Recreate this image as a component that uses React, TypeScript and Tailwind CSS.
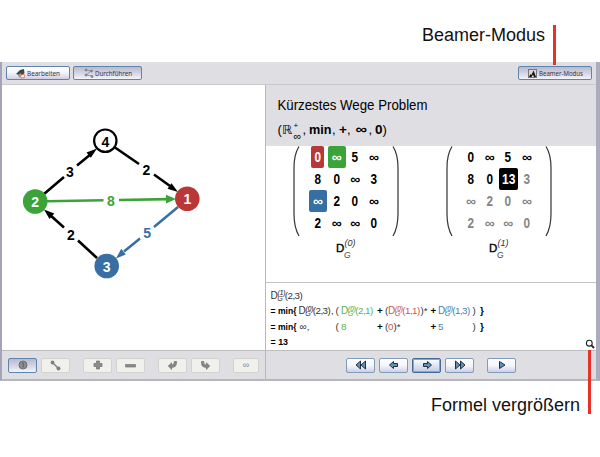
import type { ReactNode } from "react";

const raised = "border-[#7f9dbb] bg-gradient-to-b from-white via-[#f5f5fc] to-[#cfcfe5]";
const pressed = "border-[#5c84ac] bg-gradient-to-b from-[#b9bacd] via-[#d3d3e2] to-[#f4f4fc]";
const disabled = "border-[#d2d2ce] bg-[#f0f0ec]";

function Btn({ look, size, children }: { look: string; size: string; children: ReactNode }) {
  return (
    <button className={`flex shrink-0 items-center justify-center rounded-[2px] border ${look} ${size}`}>
      {children}
    </button>
  );
}

function Label({ text, width }: { text: string; width: number }) {
  return (
    <svg width={width} height="12" className="block overflow-visible">
      <text x="0" y="9" fontSize="7.800" fontFamily="Noto Sans, DejaVu Sans, sans-serif" fill="#33333f" textLength={width} lengthAdjust="spacingAndGlyphs">
        {text}
      </text>
    </svg>
  );
}

function Graph() {
  return (
    <svg width="262" height="266" viewBox="2 85 262 266" className="block" fontFamily="Liberation Sans, Arial, sans-serif" fontWeight="bold" fontSize="14" textAnchor="middle">
      <g stroke="#000" strokeWidth="2.6">
        <path d="M44 194L64 177M77 165.500L91 154M115 147.500L139 164M154 174.500L170 186M97 258L78 240.500M64 227.500L50 215" />
      </g>
      <path d="M97 148.500L90.800 157.700L86.500 152.500ZM178 192L167.500 188.700L171.500 183.200ZM44 209.500L54.300 213.600L49.500 219Z" fill="#000" />
      <path d="M47 201.200L103.500 200.300M119 200L168 199.100" stroke="#3ca33b" strokeWidth="2.6" />
      <path d="M176 199L166 194.800V203.400Z" fill="#3ca33b" />
      <path d="M178 207L154 227M140 238.500L124 251.500" stroke="#376ea3" strokeWidth="2.5" />
      <path d="M116 258.500L121.200 248.800L125.800 254.500Z" fill="#376ea3" />
      <circle cx="105.300" cy="140.700" r="11.200" fill="#fff" stroke="#000" strokeWidth="2.200" />
      <circle cx="35.200" cy="201.500" r="12.300" fill="#3ca33b" />
      <circle cx="187.300" cy="198.700" r="12.300" fill="#ba3737" />
      <circle cx="106.700" cy="266" r="12.300" fill="#376ea3" />
      <text x="105.300" y="146.500">4</text>
      <text x="70" y="177.200">3</text>
      <text x="146.500" y="175.200">2</text>
      <text x="71" y="239.600">2</text>
      <text x="111" y="205.500" fill="#3ca33b">8</text>
      <text x="147.200" y="237.800" fill="#376ea3">5</text>
      <g fill="#fff">
        <text x="35.200" y="206.500">2</text>
        <text x="187.300" y="203.700">1</text>
        <text x="106.700" y="271.500">3</text>
      </g>
    </svg>
  );
}

function Paren({ flip = false }: { flip?: boolean }) {
  return (
    <svg width="7" height="91" viewBox="0 0 7 91" className={flip ? "block -scale-x-100" : "block"}>
      <path d="M6 .5C2.500 6 1 12 1 22V68C1 78 2.500 84 6 90" fill="none" stroke="#333" strokeWidth="1.200" />
    </svg>
  );
}

type Cell = { v: string; box?: string; muted?: boolean };

function Matrix({ cells, index }: { cells: Cell[]; index: string }) {
  return (
    <div className="flex w-[106px] flex-col items-center">
      <div className="flex w-full justify-between">
        <Paren />
        <div className="grid h-[88px] grid-cols-[repeat(4,18.7px)] grid-rows-4">
          {cells.map((c, i) => (
            <div key={i} className="flex items-center justify-center">
              <span className={`flex h-[22px] items-center justify-center rounded-[2px] text-[14px] font-bold leading-none ${c.box ?? (c.muted ? "text-[#858585]" : "text-black")}`}>
                <span className={c.v === "∞" ? "text-[14px]" : c.v === "13" ? "scale-x-[0.86]" : "scale-x-[0.84]"}>{c.v}</span>
              </span>
            </div>
          ))}
        </div>
        <Paren flip />
      </div>
      <svg width="24" height="24" className="-mt-[1px] block" fontFamily="Liberation Sans, Arial, sans-serif">
        <text x="2" y="16" fontSize="11.500" stroke="#000" strokeWidth=".35">D</text>
        <text x="10.500" y="10" fontSize="9" fontStyle="italic" fill="#333">({index})</text>
        <text x="10" y="22" fontSize="8.500" fontStyle="italic" fill="#444">G</text>
      </svg>
    </div>
  );
}

const first: Cell[] = [
  { v: "0", box: "w-[13px] bg-[#ba3737] text-white" }, { v: "∞", box: "w-[18px] bg-[#3ca33b] text-white" }, { v: "5" }, { v: "∞" },
  { v: "8" }, { v: "0" }, { v: "∞" }, { v: "3" },
  { v: "∞", box: "w-[18px] bg-[#376ea3] text-white" }, { v: "2" }, { v: "0" }, { v: "∞" },
  { v: "2" }, { v: "∞" }, { v: "∞" }, { v: "0" },
];

const second: Cell[] = [
  { v: "0" }, { v: "∞" }, { v: "5" }, { v: "∞" },
  { v: "8" }, { v: "0" }, { v: "13", box: "w-[19px] shrink-0 bg-black text-white" }, { v: "3", muted: true },
  { v: "∞", muted: true }, { v: "2", muted: true }, { v: "0", muted: true }, { v: "∞", muted: true },
  { v: "2", muted: true }, { v: "∞", muted: true }, { v: "∞", muted: true }, { v: "0", muted: true },
];

function Entry({ x, y, sup, args, fill = "#333" }: { x: number; y: number; sup: string; args: string; fill?: string }) {
  return (
    <g fill={fill}>
      <text x={x} y={y} fontSize="10">D</text>
      <text x={x + 7} y={y - 3.5} fontSize="7.800" fontStyle="italic" textLength="8" lengthAdjust="spacingAndGlyphs" stroke={fill} strokeWidth=".15">({sup})</text>
      <text x={x + 6.7} y={y + 2} fontSize="7.200" fontStyle="italic">G</text>
      <text x={x + 14.3} y={y} fontSize="9.800" textLength="18" lengthAdjust="spacing">({args})</text>
    </g>
  );
}

function Formula() {
  return (
    <svg width="330" height="68" viewBox="266 283 330 68" className="block" fontFamily="Liberation Sans, Arial, sans-serif" fontSize="9.800">
      <Entry x={270.5} y={298.5} sup="1" args="2,3" />
      <g fontWeight="bold">
        <text x="270.500" y="314" textLength="26" lengthAdjust="spacingAndGlyphs">= min{"{"}</text>
        <text x="270.500" y="329.500" textLength="26" lengthAdjust="spacingAndGlyphs">= min{"{"}</text>
        <text x="270.500" y="344.500" textLength="17.500" lengthAdjust="spacingAndGlyphs">= 13</text>
        <text x="377" y="314">+</text>
        <text x="377" y="329.500">+</text>
        <text x="430.500" y="314">+</text>
        <text x="430.500" y="329.500">+</text>
        <text x="480" y="314">{"}"}</text>
        <text x="480" y="329.500">{"}"}</text>
      </g>
      <Entry x={298.5} y={314} sup="0" args="2,3" />
      <Entry x={341} y={314} sup="0" args="2,1" fill="#55b454" />
      <Entry x={388} y={314} sup="0" args="1,1" fill="#ca5555" />
      <Entry x={438} y={314} sup="0" args="1,3" fill="#477fb3" />
      <g fill="#333">
        <text x="331" y="314">,</text>
        <text x="335.500" y="314">(</text>
        <text x="385" y="314">(</text>
        <text x="420.500" y="314">)*</text>
        <text x="472.500" y="314">)</text>
        <text x="299.500" y="329.500" textLength="10">∞,</text>
        <text x="335.500" y="329.500">(</text>
        <text x="385" y="329.500">(</text>
        <text x="393.500" y="329.500">)*</text>
        <text x="472.500" y="329.500">)</text>
      </g>
      <text x="341" y="329.500" fill="#55b454">8</text>
      <text x="388" y="329.500" fill="#ca5555">0</text>
      <text x="438" y="329.500" fill="#477fb3">5</text>
      <circle cx="589.300" cy="343.200" r="2.900" fill="#fff" stroke="#222" strokeWidth="1.100" />
      <path d="M591.200 345.200L594 348" stroke="#222" strokeWidth="1.800" />
    </svg>
  );
}

function PlayIcon({ d }: { d: string }) {
  return (
    <svg width="14" height="12" viewBox="0 0 14 12" className="block">
      <path d={d} fill="#6390b5" stroke="#1f3144" strokeWidth="1" />
    </svg>
  );
}

function LeftTools() {
  return (
    <div className="flex h-[29px] items-center border-t border-[#bdbdc0] pl-[6px]">
      <Btn look={pressed} size="h-[15px] w-[29px]">
        <svg width="10" height="10" viewBox="0 0 10 10"><circle cx="5" cy="5" r="4" fill="#8c8c94" stroke="#707078" /><path d="M4 3.500L5.200 2.800V7.500" stroke="#606068" fill="none" /></svg>
      </Btn>
      <div className="ml-[4px] flex gap-[13px]">
        <Btn look={disabled} size="h-[15px] w-[29px]">
          <svg width="11" height="11" viewBox="0 0 11 11" fill="#808080"><path d="M2.500 2.500L8.500 8.500" stroke="#808080" strokeWidth="1.500" /><circle cx="2.500" cy="2.500" r="1.900" /><circle cx="8.500" cy="8.500" r="2" /></svg>
        </Btn>
        <div className="flex gap-[4px]">
          <Btn look={disabled} size="h-[15px] w-[29px]">
            <svg width="10" height="10" viewBox="0 0 10 10"><path d="M3.500 1H6.500V3.500H9V6.500H6.500V9H3.500V6.500H1V3.500H3.500Z" fill="#8c8c8c" stroke="#777" strokeWidth=".8" /></svg>
          </Btn>
          <Btn look={disabled} size="h-[15px] w-[29px]">
            <svg width="11" height="10" viewBox="0 0 11 10"><path d="M.5 4.500H10.500V7H.5Z" fill="#8c8c8c" stroke="#777" strokeWidth=".7" /></svg>
          </Btn>
        </div>
        <div className="flex gap-[4px]">
          <Btn look={disabled} size="h-[15px] w-[29px]">
            <svg width="11" height="11" viewBox="0 0 11 11"><path d="M.8 6L5 2V4.500C6.300 4.300 7 3 7 1H9.800C10.500 5 8.500 7.800 5 7.800V10.200Z" fill="#858585" /></svg>
          </Btn>
          <Btn look={disabled} size="h-[15px] w-[29px]">
            <svg width="11" height="11" viewBox="0 0 11 11"><path d="M10.200 6L6 2V4.500C4.700 4.300 4 3 4 1H1.200C.5 5 2.500 7.800 6 7.800V10.200Z" fill="#858585" /></svg>
          </Btn>
        </div>
        <Btn look={disabled} size="h-[15px] w-[26px]">
          <span className="text-[9px] leading-none text-[#888]">∞</span>
        </Btn>
      </div>
    </div>
  );
}

export default function App() {
  return (
    <div className="relative flex h-[457px] w-[600px] flex-col overflow-hidden bg-white font-['Liberation_Sans',Arial,sans-serif] text-black">
      <div className="flex h-[62px] justify-end">
        <svg width="200" height="62" viewBox="400 0 200 62" className="block">
          <text x="422" y="41" fontSize="17.600" fill="#111" textLength="123" lengthAdjust="spacingAndGlyphs">Beamer-Modus</text>
        </svg>
      </div>

      <div className="flex h-[319px] flex-col border-b-2 border-l-2 border-r-4 border-b-[#b5b7ba] border-l-[#a4a4b8] border-r-[#adabc0] bg-[#dfdee3]">
        <div className="flex h-[23px] items-center justify-between border-b border-[#c9c9ce] pl-[4px] pr-[4px]">
          <div className="flex gap-[3px]">
            <Btn look="border-[#5c84ac] bg-gradient-to-b from-white via-[#f2f2fa] to-[#cfcfe5]" size="h-[14px] w-[64px] gap-[1px]">
              <svg width="10" height="11" viewBox="0 0 10 11" className="shrink-0"><path d="M0 6L4 2L8 1L8.500 5L6 8Z" fill="#444" /><path d="M2 7L5 5L6 9L3 9.500Z" fill="#91a492" /><path d="M4.500 7.500L8 6L8.500 9.500L5 10Z" fill="#fff" stroke="#e06b64" strokeWidth=".9" /></svg>
              <Label text="Bearbeiten" width={33} />
            </Btn>
            <Btn look={pressed} size="h-[14px] w-[69px] gap-[1px]">
              <svg width="10" height="10" viewBox="0 0 10 10" fill="#85858b" stroke="#85858b" className="shrink-0"><path d="M2 2L7 3L2 7L8 8" fill="none" strokeWidth=".8" /><circle cx="2" cy="2" r="1" /><circle cx="7.500" cy="3" r="1" /><circle cx="2" cy="7" r="1" /><circle cx="8" cy="8.500" r="1" /></svg>
              <Label text="Durchführen" width={37} />
            </Btn>
          </div>
          <Btn look={pressed} size="h-[14px] w-[74px] gap-[2px]">
            <svg width="9" height="9" viewBox="0 0 9 9" className="shrink-0"><rect x=".5" y=".5" width="8" height="8" fill="#d7d7df" stroke="#777" /><path d="M1 8L2.500 5L3.500 6L5.500 1.500L8 8H6L5 5.500L3.500 8Z" fill="#111" /></svg>
            <Label text="Beamer-Modus" width={44} />
          </Btn>
        </div>

        <div className="flex h-[294px]">
          <div className="flex w-[263px] flex-col">
            <div className="h-[265px] overflow-hidden bg-white"><Graph /></div>
            <LeftTools />
          </div>
          <div className="flex w-[331px] flex-col border-l border-[#b8b8bb]">
            <svg width="330" height="61" viewBox="266 85 330 61" className="block" fontSize="14">
              <text x="277.500" y="109.500" textLength="150" lengthAdjust="spacingAndGlyphs">Kürzestes Wege Problem</text>
              <text x="277.500" y="134" fontSize="13">(</text>
              <text x="282" y="134" fontSize="12.500" fontFamily="DejaVu Sans, sans-serif" textLength="10" lengthAdjust="spacingAndGlyphs">ℝ</text>
              <text x="293.500" y="128" fontSize="8">+</text>
              <text x="293.500" y="140" fontSize="11">∞</text>
              <text x="302.500" y="134" fontSize="13">,</text>
              <g fontSize="13.500" fontWeight="bold">
                <text x="309" y="134" textLength="22.500" lengthAdjust="spacingAndGlyphs">min</text>
                <text x="339" y="134">+</text>
                <text x="355.500" y="134" fontSize="14" textLength="11.500" lengthAdjust="spacingAndGlyphs">∞</text>
                <text x="375" y="134">0</text>
              </g>
              <g fontSize="13">
                <text x="332" y="134">,</text><text x="347" y="134">,</text><text x="368.500" y="134">,</text><text x="382.500" y="134">)</text>
              </g>
            </svg>
            <div className="flex h-[136px] gap-[47px] overflow-hidden bg-white pl-[27px]">
              <Matrix cells={first} index="0" />
              <Matrix cells={second} index="1" />
            </div>
            <div className="h-[68px] border-t border-[#c3c3c6] bg-white"><Formula /></div>
            <div className="flex h-[29px] items-center border-t border-[#bdbdc0] pl-[80px]">
              <div className="flex gap-[4px]">
                <Btn look={raised} size="h-[15px] w-[29px]"><PlayIcon d="M6.500 2V10L2 6ZM11.500 2V10L7 6Z" /></Btn>
                <Btn look={raised} size="h-[15px] w-[29px]"><PlayIcon d="M2.500 6L6.500 2.500V4.500H10.500V7.500H6.500V9.500Z" /></Btn>
                <Btn look="border-[#426b9d] bg-gradient-to-b from-white to-[#c3c9e2] ring-1 ring-inset ring-[#8ba4cc]" size="h-[15px] w-[29px]"><PlayIcon d="M11.500 6L7.500 2.500V4.500H3.500V7.500H7.500V9.500Z" /></Btn>
                <Btn look={raised} size="h-[15px] w-[29px]"><PlayIcon d="M2.500 2V10L7 6ZM7.500 2V10L12 6Z" /></Btn>
              </div>
              <div className="ml-[13px]"><Btn look={raised} size="h-[15px] w-[29px]"><PlayIcon d="M4.500 2.500V9.500L10 6Z" /></Btn></div>
            </div>
          </div>
        </div>
      </div>
      <div className="flex justify-end">
        <svg width="200" height="60" viewBox="400 381 200 60" className="block">
          <text x="431" y="410.500" fontSize="17.600" fill="#111" textLength="149" lengthAdjust="spacingAndGlyphs">Formel vergrößern</text>
        </svg>
      </div>
      <div className="absolute left-[553px] top-[25px] h-[40px] w-[3px] bg-[#e83229]" />
      <div className="absolute left-[588px] top-[350px] h-[64px] w-[3px] bg-[#e83229]" />
    </div>
  );
}
